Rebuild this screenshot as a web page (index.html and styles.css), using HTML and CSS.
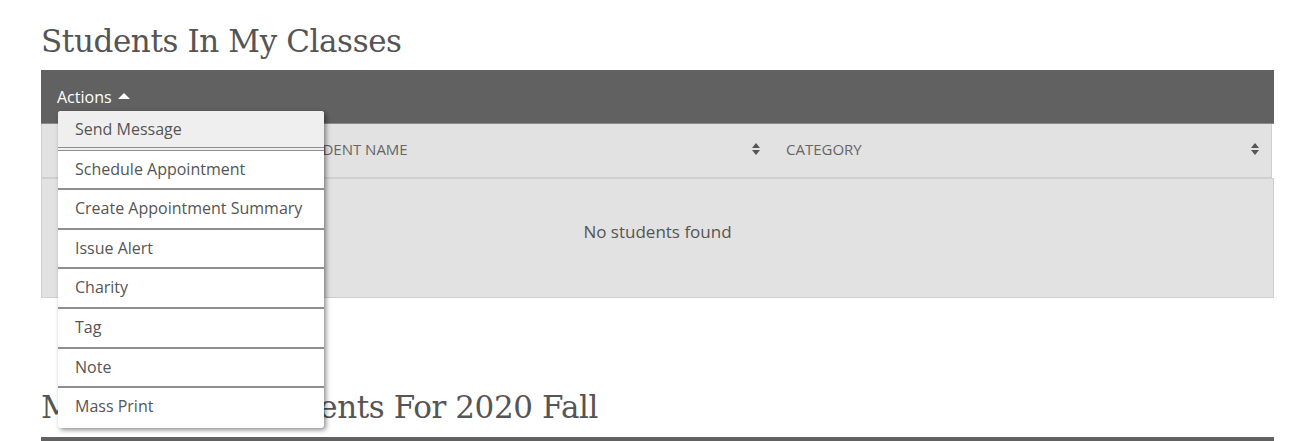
FILE: index.html
```html
<!DOCTYPE html>
<html lang="en">
<head>
    <meta charset="UTF-8">
    <title>Students In My Classes</title>
    <link rel="stylesheet" href="styles.css">
</head>
<body>
<div class="wrap">
    <section class="block first">
        <h2>Students In My Classes</h2>
        <div class="toolbar">
            <span class="actions">Actions <i class="caret"></i></span>
            <ul class="menu">
                <li class="hover">Send Message</li>
                <li>Schedule Appointment</li>
                <li>Create Appointment Summary</li>
                <li>Issue Alert</li>
                <li>Charity</li>
                <li>Tag</li>
                <li>Note</li>
                <li>Mass Print</li>
            </ul>
        </div>
        <div class="thead">
            <div class="col check"></div>
            <div class="col name">Student Name <i class="sort"></i></div>
            <div class="col cat">Category <i class="sort"></i></div>
        </div>
        <div class="tbody">No students found</div>
    </section>
    <section class="block">
        <h2>My Assigned Students For 2020 Fall</h2>
        <div class="toolbar short"></div>
    </section>
</div>
</body>
</html>
```

FILE: styles.css
```css
* {margin:0; padding:0; box-sizing:border-box; list-style:none;}
body {font-family:"Open Sans", sans-serif; color:#555; background:#fff; overflow:hidden;}
.wrap {width:1233px; margin-left:41px;}
h2 {font-family:"DejaVu Serif", serif; font-weight:normal; font-size:31px; color:#555; height:70px; padding-top:21px; line-height:40px; letter-spacing:-0.4px;}
.block + .block {margin-top:78px;}
.block + .block h2 {height:61px; padding-top:11px;}
.toolbar {position:relative; height:54px; background:#616161; border-bottom:1px solid #8a8a8a;}
.toolbar.short {height:10px;}
.actions {display:inline-flex; align-items:center; gap:6px; color:#fff; font-size:16px; padding:16px 0 0 16px;}
.caret {width:0; height:0; border-left:6px solid transparent; border-right:6px solid transparent; border-bottom:6px solid #fff; margin-top:-2px;}
.menu {position:absolute; left:17px; top:41px; width:266px; background:#fff; border-radius:3px; box-shadow:2px 2px 5px rgba(0,0,0,.45); z-index:2; overflow:hidden;}
.menu li {height:39.6px; line-height:37px; padding-left:17px; font-size:16px; color:#555; border-bottom:2px solid #8e8e8e;}
.menu li.hover {background:#efefef; border-bottom:4px double #8e8e8e;}
.menu li:last-child {border-bottom:none;}
.thead {display:flex; height:54px; background:#e2e2e2; border:1px solid #cfcfcf; border-top:none; margin-right:2px;}
.col {display:flex; align-items:center; justify-content:space-between; font-size:15px; text-transform:uppercase; color:#666; padding:0 12px 3px 14px;}
.check {width:239px; padding:0;}
.name {width:491px;}
.cat {flex:1;}
.sort {position:relative; width:8px; height:12px;}
.sort::before, .sort::after {content:""; position:absolute; left:0; border-left:4px solid transparent; border-right:4px solid transparent;}
.sort::before {top:0; border-bottom:5px solid #555;}
.sort::after {bottom:0; border-top:5px solid #555;}
.tbody {height:120px; background:#e2e2e2; border:1px solid #cfcfcf; border-top:1px solid #d0d0d0; display:flex; align-items:center; justify-content:center; font-size:17px; color:#555; padding-bottom:14px;}
```
